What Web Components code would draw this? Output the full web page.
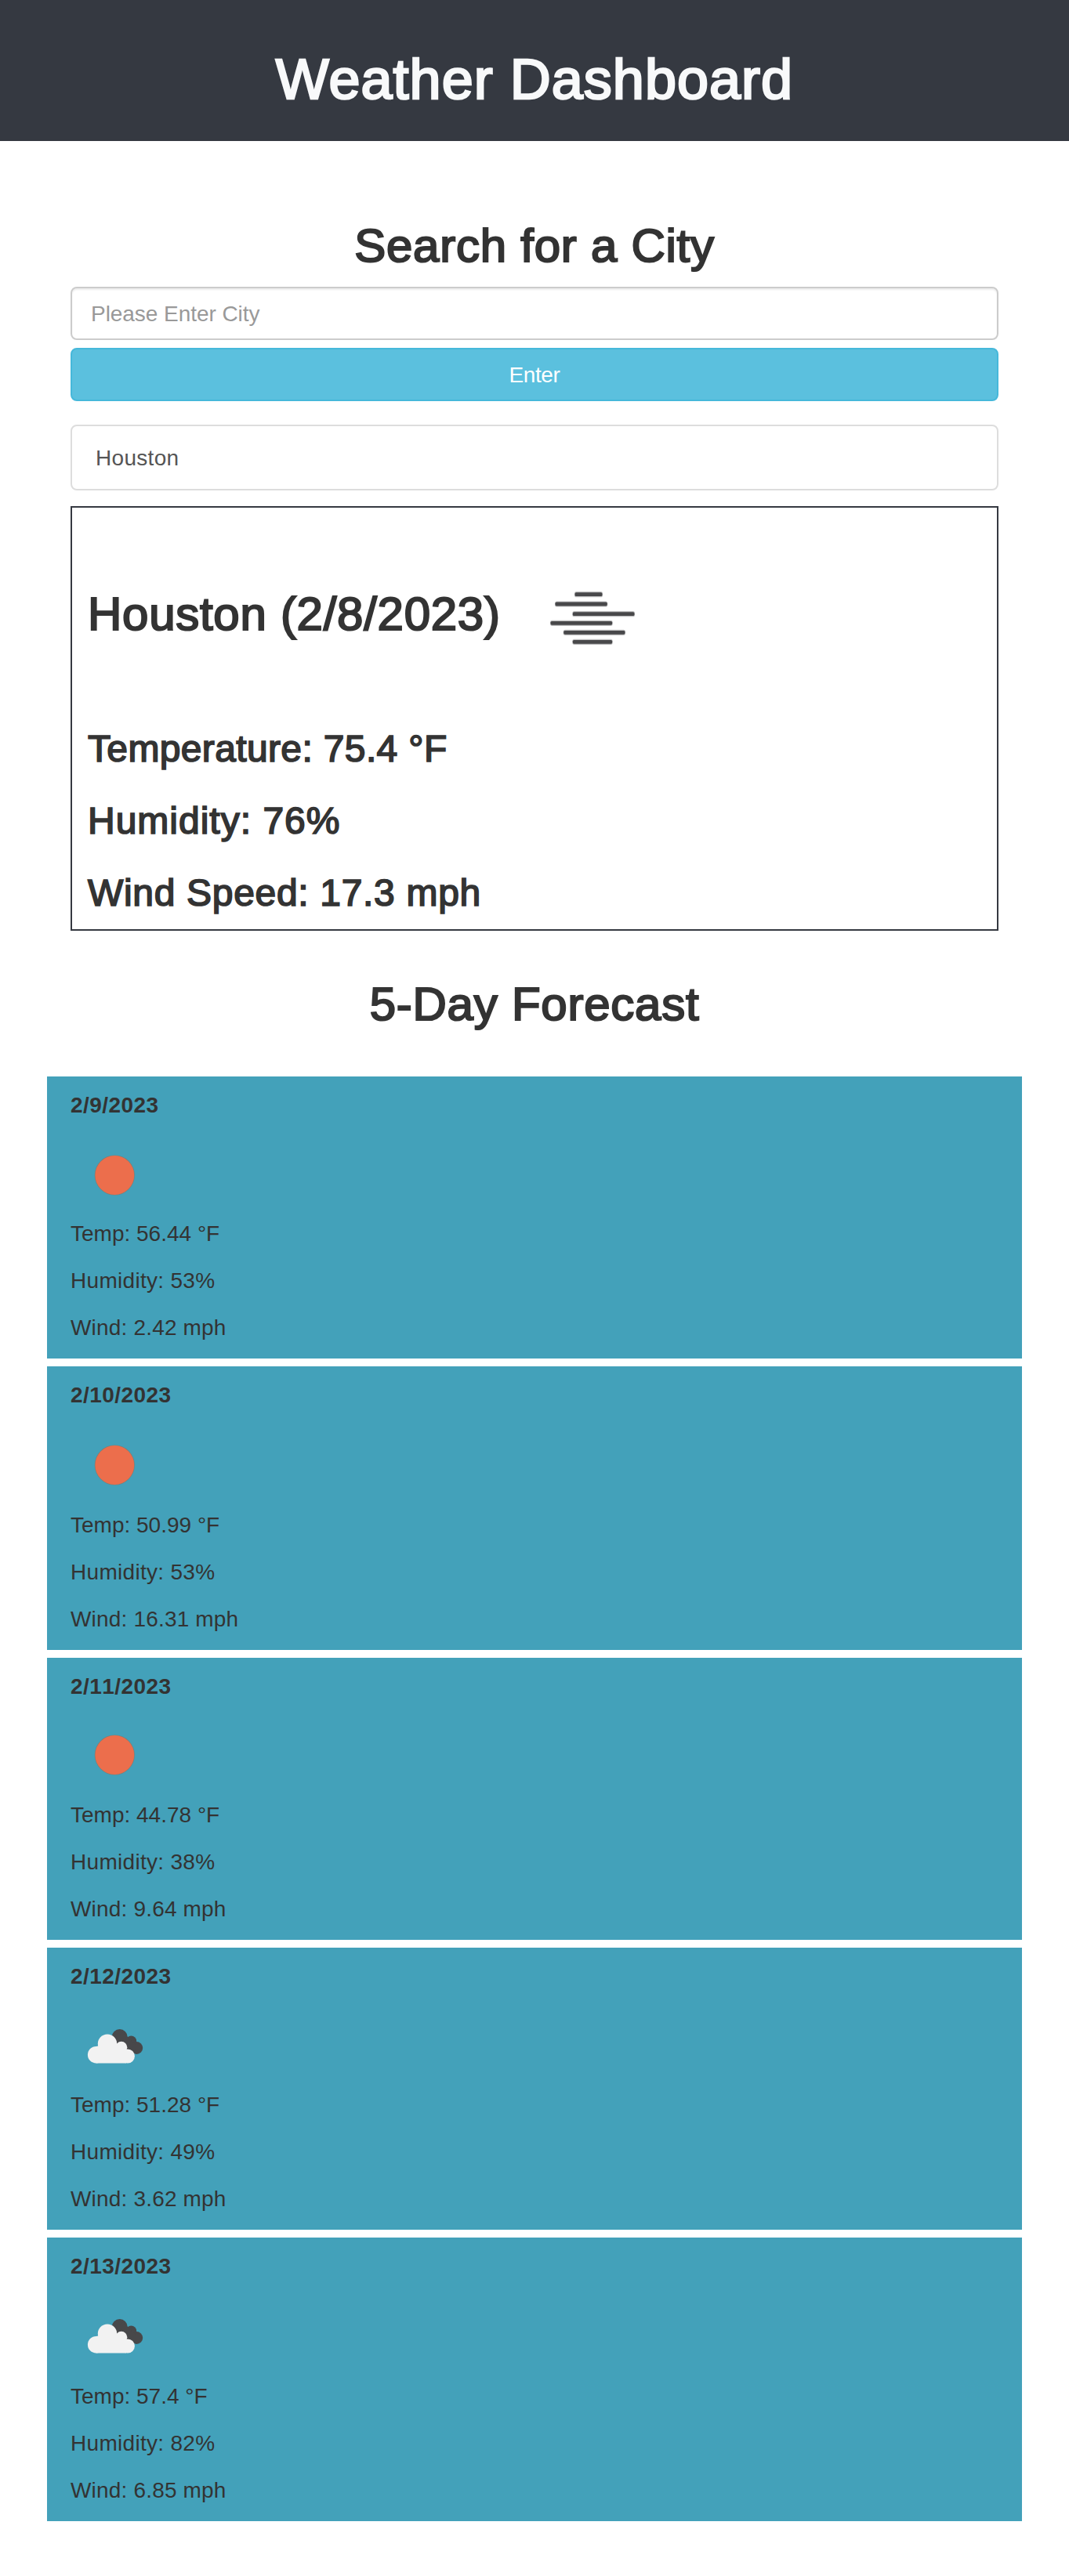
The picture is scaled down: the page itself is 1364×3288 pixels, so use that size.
<!DOCTYPE html>
<html lang="en">
<head>
<meta charset="utf-8">
<title>Weather Dashboard</title>
<style>
body{margin:0;background:#fff;color:#333;font:28px/40px "Liberation Sans",Arial,sans-serif}
</style>
</head>
<body>
<weather-app></weather-app>
<script>
const define = (name, html) => customElements.define(name, class extends HTMLElement {
  connectedCallback() {
    if (this.shadowRoot) return;
    this.attachShadow({mode: 'open'}).innerHTML = typeof html === 'function' ? html(this) : html;
  }
});

// Medium weight is drawn as regular glyphs with a thin stroke.
const medium = 'margin:0;font-weight:400;-webkit-text-stroke:.036em currentColor;white-space:nowrap;';

define('page-header', `<style>
:host{display:block;box-sizing:border-box;height:180px;padding-top:61px;background:#353941;color:#f8f9fa;text-align:center}
h1{${medium}font-size:72px;line-height:80px;letter-spacing:1.02px}
</style><h1><slot></slot></h1>`);

define('section-title', `<style>
:host{display:block;text-align:center}
h2{${medium}font-size:60px;line-height:67px;letter-spacing:.75px}
</style><h2><slot></slot></h2>`);

define('search-form', `<style>
:host{display:flex;flex-direction:column;gap:10px}
input,button{box-sizing:border-box;width:100%;height:68px;margin:0;padding:13px 24px 11px;border-radius:8px;font:inherit;line-height:40px}
input{border:2px solid #ccc;background:#fff;color:#555;box-shadow:inset 0 2px 2px rgba(0,0,0,.075)}
input::placeholder{color:#999;opacity:1;letter-spacing:-.05px}
button{border:2px solid #46b8da;background:#5bc0de;color:#fff;letter-spacing:-.4px}
</style><input type="text" placeholder="Please Enter City"><button type="button">Enter</button>`);

define('city-item', `<style>
:host{display:block;padding:21px 30px 19px;border:2px solid #ddd;border-radius:8px;color:#555;letter-spacing:.3px}
</style><slot></slot>`);

const icons = {
  fog: '<g>' + [[27,19.7,36],[2,32,67.3],[24.3,44.7,79.7],[-4,56.3,79.7],[12.7,68.3,79.3],[24.3,80.3,51.4]].map(([x,y,w]) =>
    `<rect x="${x}" y="${y-3.6}" width="${w}" height="7.2" rx="2.6" fill="#48484a" opacity=".35"/><rect x="${x+.5}" y="${y-2.4}" width="${w-1}" height="4.8" rx="1.6" fill="#48484a"/>`).join('') + '</g>',
  sun: '<circle cx="50.3" cy="50" r="25.6" fill="#7d7f78"/><circle cx="50.3" cy="50" r="24.9" fill="#ec6e4c"/>',
  clouds: `<g fill="#48484a"><circle cx="56.7" cy="40" r="10"/><circle cx="71.4" cy="45.2" r="6.8"/><circle cx="78.3" cy="54" r="7.9"/><path d="M50 46 60 34 66 39 70 44 78 50 76 61 64 58Z"/></g>
<g fill="#f2f2f2"><circle cx="26.7" cy="62.7" r="10.8"/><circle cx="41" cy="48.6" r="12.2"/><circle cx="58.8" cy="53.3" r="7.5"/><circle cx="66.8" cy="64.5" r="9.1"/><path d="M26.7 52 36 50H56L65 58V73.6H26.7Z"/></g>`
};
define('weather-icon', el => `<style>
:host{display:block;width:100px;height:100px;flex:none}
svg{display:block;overflow:visible}
</style><svg width="100" height="100" viewBox="0 0 100 100" aria-hidden="true">${icons[el.getAttribute('type')]}</svg>`);

define('current-weather', `<style>
:host{display:block;padding:0 20px 20px;border:2px solid #353941}
.top{display:flex;box-sizing:border-box;height:281px;padding-top:102px}
h2{${medium}flex:0 0 594px;font-size:60px;line-height:67px;letter-spacing:.72px}
weather-icon{margin-top:-11px}
.stats{display:flex;flex-direction:column;gap:39px}
h3{${medium}font-size:48px;line-height:53px}
.t{letter-spacing:.36px}.h{letter-spacing:1px}.w{letter-spacing:.68px}
</style>
<div class="top"><h2>Houston (2/8/2023)</h2><weather-icon type="fog"></weather-icon></div>
<div class="stats"><h3 class="t">Temperature: 75.4 °F</h3><h3 class="h">Humidity: 76%</h3><h3 class="w">Wind Speed: 17.3 mph</h3></div>`);

define('forecast-card', el => `<style>
:host{display:flex;flex-direction:column;padding:17px 30px 19px;background:#43a1ba}
b{font-kerning:none;letter-spacing:.45px}
weather-icon{margin:${el.getAttribute('icon-top') || 17}px 0 0 6px}
.stats{display:flex;flex-direction:column;gap:20px;margin-top:${el.getAttribute('stats-gap') || 7}px}
.h{letter-spacing:.3px}.w{letter-spacing:.18px}
</style>
<b>${el.getAttribute('date')}</b><weather-icon type="${el.getAttribute('icon')}"></weather-icon>
<div class="stats"><span>Temp: ${el.getAttribute('temp')} °F</span><span class="h">Humidity: ${el.getAttribute('humidity')}%</span><span class="w">Wind: ${el.getAttribute('wind')} mph</span></div>`);

define('weather-app', `<style>
:host{display:block}
main{display:flex;flex-direction:column;padding:100px 60px 70px}
.search{display:flex;flex-direction:column;padding:0 30px}
search-form{margin-top:19px}
city-item{margin-top:30px}
current-weather{margin-top:20px}
.forecast-title{margin-top:60px}
.forecast{display:flex;flex-direction:column;gap:10px;margin-top:59px}
</style>
<page-header>Weather Dashboard</page-header>
<main>
<div class="search">
<section-title>Search for a City</section-title>
<search-form></search-form>
<city-item>Houston</city-item>
<current-weather></current-weather>
</div>
<section-title class="forecast-title">5-Day Forecast</section-title>
<div class="forecast">
<forecast-card date="2/9/2023" icon="sun" icon-top="19" stats-gap="5" temp="56.44" humidity="53" wind="2.42"></forecast-card>
<forecast-card date="2/10/2023" icon="sun" icon-top="19" temp="50.99" humidity="53" wind="16.31"></forecast-card>
<forecast-card date="2/11/2023" icon="sun" temp="44.78" humidity="38" wind="9.64"></forecast-card>
<forecast-card date="2/12/2023" icon="clouds" temp="51.28" humidity="49" wind="3.62"></forecast-card>
<forecast-card date="2/13/2023" icon="clouds" stats-gap="9" temp="57.4" humidity="82" wind="6.85"></forecast-card>
</div>
</main>`);
</script>
</body>
</html>
